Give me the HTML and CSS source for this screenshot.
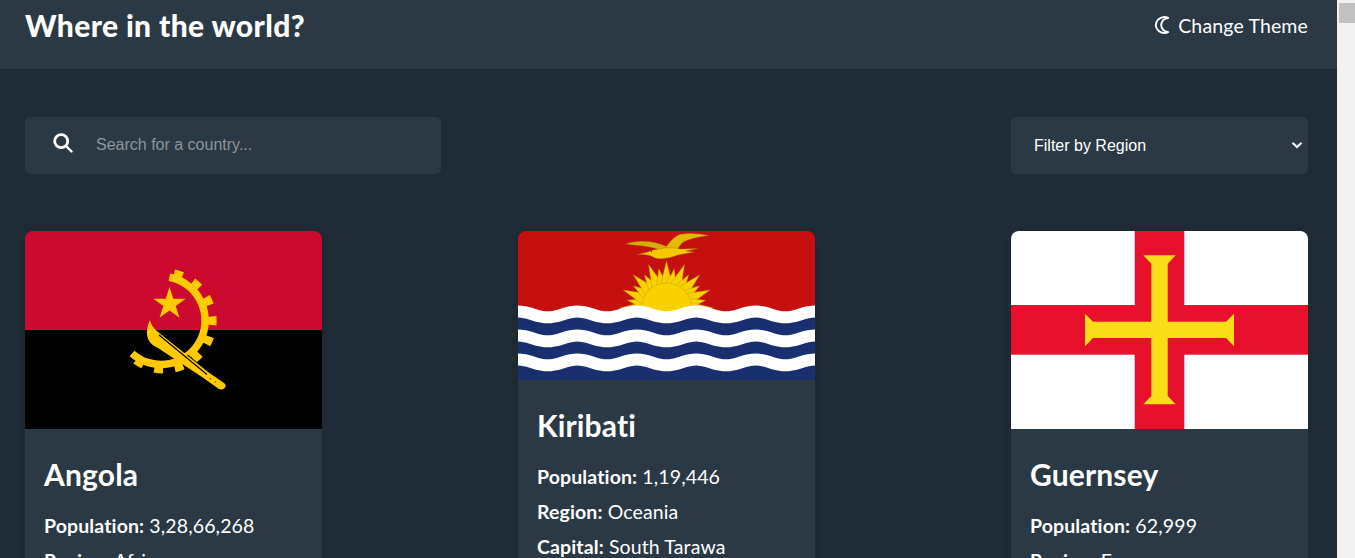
FILE: index.html
```html
<!DOCTYPE html>
<html>

<head>
    <meta charset="utf-8">
    <title>Where in the world?</title>
    <link rel="stylesheet" href="styles.css">
</head>

<body>
    <header class="topBar">
        <h1 class="siteTitle">Where in the world?</h1>
        <button class="themeButton" type="button">
            <svg class="moonIcon" viewBox="0 0 18 18" width="18" height="18">
                <path d="M11.600 1.100C7 1.100 2.800 4.500 2.800 9s4.200 7.900 8.800 7.900c1.300 0 2.500-.3 3.500-.8-3.800-.2-6.900-3.300-6.900-7.100s3.100-6.900 6.900-7.100c-1-.5-2.200-.8-3.500-.8z" fill="none" stroke="#fff" stroke-width="2" stroke-linejoin="round" />
            </svg>
            Change Theme
        </button>
    </header>

    <main class="content">
        <form class="toolBar">
            <label class="searchBox">
                <svg class="searchIcon" viewBox="0 0 20 20" width="20" height="20">
                    <circle cx="8.200" cy="8.200" r="6.500" fill="none" stroke="#fff" stroke-width="2.800" />
                    <path d="M13 13l5.500 5.500" stroke="#fff" stroke-width="2.400" stroke-linecap="round" />
                </svg>
                <input class="searchInput" type="text" placeholder="Search for a country...">
            </label>
            <div class="regionFilter">
                <select class="regionSelect">
                    <option>Filter by Region</option>
                    <option>Africa</option>
                    <option>Americas</option>
                    <option>Asia</option>
                    <option>Europe</option>
                    <option>Oceania</option>
                </select>
                <svg class="selectArrow" viewBox="0 0 12 8" width="12" height="8">
                    <path d="M1.500 1.800L6 6l4.500-4.200" fill="none" stroke="#fff" stroke-width="2.200" />
                </svg>
            </div>
        </form>

        <section class="countryGrid">
            <article class="countryCard">
                <svg class="flag" viewBox="0 0 297 198" width="297" height="198">
                    <rect width="297" height="99" fill="#cc092f" />
                    <rect y="99" width="297" height="99" />
                    <polygon fill="#ffcb00" points="144.500,56 148.300,67.700 160.700,67.700 150.700,75 154.500,86.800 144.500,79.500 134.500,86.800 138.300,75 128.300,67.700 140.700,67.700" />
                    <path d="M144.400 46.300A44 44 0 1 1 107 122.500" fill="none" stroke="#ffcb00" stroke-width="7.500" />
                    <path d="M149 43.500A47.500 47.500 0 1 1 106 124" fill="none" stroke="#ffcb00" stroke-width="10" stroke-dasharray="8.500 11.500" />
                    <path d="M160 127L184 147" stroke="#000" stroke-width="9" />
                    <path d="M125 89C120 100 120 111 133 117L177 146 194 158C199 160 203 155 199 152L183 141 133 101C129 98 126 94 125 89z" fill="#ffcb00" />
                    <path d="M134 104L182 143.500" stroke="#000" stroke-width="1.200" />
                    <path d="M185 147.500l.5.300M190 151l.5.300" stroke="#000" stroke-width="1.600" />
                </svg>
                <div class="cardBody">
                    <h2 class="countryName">Angola</h2>
                    <p class="countryInfo"><b>Population:</b> 3,28,66,268</p>
                    <p class="countryInfo"><b>Region:</b> Africa</p>
                    <p class="countryInfo"><b>Capital:</b> Luanda</p>
                </div>
            </article>

            <article class="countryCard">
                <svg class="flag" viewBox="0 0 297 149" width="297" height="149">
                    <defs>
                        <polygon id="longRay" points="142,56 148.500,30 155,56" fill="#f9d000" stroke="#a88400" stroke-width=".3" />
                        <polygon id="shortRay" points="142.500,56 148.500,37 154.500,56" fill="#f9d000" stroke="#a88400" stroke-width=".3" />
                        <path id="wave" d="M0 80.500C12 80.500 18 86.300 29.700 86.300S47.400 80.500 59.400 80.500 77.400 86.300 89.100 86.300 106.800 80.500 118.800 80.500 136.800 86.300 148.500 86.300 166.200 80.500 178.200 80.500 196.200 86.300 207.900 86.300 225.600 80.500 237.600 80.500 255.600 86.300 267.300 86.300 285 80.500 297 80.500" fill="none" stroke="#fff" stroke-width="12" />
                    </defs>
                    <rect width="297" height="149" fill="#c60f0f" />
                    <use href="#longRay" transform="rotate(-90 148.500 77)" />
                    <use href="#shortRay" transform="rotate(-78.750 148.500 77)" />
                    <use href="#longRay" transform="rotate(-67.500 148.500 77)" />
                    <use href="#shortRay" transform="rotate(-56.250 148.500 77)" />
                    <use href="#longRay" transform="rotate(-45 148.500 77)" />
                    <use href="#shortRay" transform="rotate(-33.750 148.500 77)" />
                    <use href="#longRay" transform="rotate(-22.500 148.500 77)" />
                    <use href="#shortRay" transform="rotate(-11.250 148.500 77)" />
                    <use href="#longRay" transform="rotate(0 148.500 77)" />
                    <use href="#shortRay" transform="rotate(11.250 148.500 77)" />
                    <use href="#longRay" transform="rotate(22.500 148.500 77)" />
                    <use href="#shortRay" transform="rotate(33.750 148.500 77)" />
                    <use href="#longRay" transform="rotate(45 148.500 77)" />
                    <use href="#shortRay" transform="rotate(56.250 148.500 77)" />
                    <use href="#longRay" transform="rotate(67.500 148.500 77)" />
                    <use href="#shortRay" transform="rotate(78.750 148.500 77)" />
                    <use href="#longRay" transform="rotate(90 148.500 77)" />
                    <circle cx="148.500" cy="77" r="25" fill="#f9d000" stroke="#a88400" stroke-width=".3" />
                    <rect y="84" width="297" height="65" fill="#1a2f70" />
                    <use href="#wave" />
                    <use href="#wave" y="24" />
                    <use href="#wave" y="48" />
                    <g fill="#f7c800" stroke="#8a6a00" stroke-width=".3">
                        <path d="M108 13C118 9 135 9 150 16L146 21C135 15 122 15 108 13z" fill="#d9ad00" />
                        <path d="M146 19C152 10 158 3 165 3 175 2 183 3 191 4.500 180 6 170 8 164 12L158 20z" fill="#e3b800" />
                        <path d="M119 23.500L130 21C134 18 140 19 146 17 152 17 158 16 162 18L180 17.500 168 20 176 21 160 24C152 27 142 29 137 27 134 25 130 23 119 23.500z" />
                    </g>
                    <circle cx="133.500" cy="20.300" r=".7" fill="#222" />
                </svg>
                <div class="cardBody">
                    <h2 class="countryName">Kiribati</h2>
                    <p class="countryInfo"><b>Population:</b> 1,19,446</p>
                    <p class="countryInfo"><b>Region:</b> Oceania</p>
                    <p class="countryInfo"><b>Capital:</b> South Tarawa</p>
                </div>
            </article>

            <article class="countryCard">
                <svg class="flag" viewBox="0 0 297 198" width="297" height="198">
                    <rect width="297" height="198" fill="#fff" />
                    <rect x="123.700" width="49.600" height="198" fill="#e8112d" />
                    <rect y="74" width="297" height="49.700" fill="#e8112d" />
                    <polygon fill="#f9dd16" points="132.300,24.300 164.700,24.300 156.700,32.700 156.700,90.700 215,90.700 223,82.700 223,115.300 215,107 156.700,107 156.700,165 164.700,173.300 132.300,173.300 140.300,165 140.300,107 82,107 74,115.300 74,82.700 82,90.700 140.300,90.700 140.300,32.700" />
                </svg>
                <div class="cardBody">
                    <h2 class="countryName">Guernsey</h2>
                    <p class="countryInfo"><b>Population:</b> 62,999</p>
                    <p class="countryInfo"><b>Region:</b> Europe</p>
                    <p class="countryInfo"><b>Capital:</b> St. Peter Port</p>
                </div>
            </article>
        </section>
    </main>

    <div class="scrollBar">
        <div class="scrollThumb"></div>
    </div>
</body>

</html>
```

FILE: styles.css
```css
body {
    margin: 0;
    padding-right: 18px;
    background-color: #202c37;
    color: #fff;
    font-family: "Lato", "Liberation Sans", sans-serif;
}

.scrollBar {
    position: fixed;
    top: 0;
    right: 0;
    bottom: 0;
    width: 18px;
    padding-top: 3px;
    box-sizing: border-box;
    background-color: #f1f1f1;
}

.scrollThumb {
    height: 20px;
    margin-left: 2px;
    background-color: #c1c1c1;
}

.topBar {
    display: flex;
    justify-content: space-between;
    align-items: flex-start;
    height: 69px;
    padding: 0 29px 0 25px;
    background-color: #2b3945;
    box-shadow: 0 2px 6px rgba(0, 0, 0, 0.1);
}

.siteTitle {
    margin: 7px 0 0;
    font-size: 30px;
    line-height: 36px;
    font-weight: 900;
    letter-spacing: 0.37px;
}

.themeButton {
    display: flex;
    align-items: center;
    gap: 7px;
    margin-top: 13px;
    padding: 0;
    height: 24px;
    border: 0;
    background: none;
    color: #fff;
    font-family: inherit;
    font-size: 19.500px;
    letter-spacing: 0.15px;
}

.content {
    padding: 48px 29px 0 25px;
}

.toolBar {
    display: flex;
    justify-content: space-between;
    margin: 0 0 57px;
}

.searchBox {
    display: flex;
    align-items: center;
    gap: 23px;
    width: 416px;
    height: 57px;
    padding: 0 0 2px 28px;
    box-sizing: border-box;
    border-radius: 5px;
    background-color: #2b3945;
    box-shadow: 0 2px 9px rgba(0, 0, 0, 0.05);
}

.searchIcon {
    margin-bottom: 3px;
}

.searchInput {
    flex: 1;
    min-width: 0;
    padding: 0;
    border: 0;
    outline: 0;
    background: none;
    color: #fff;
    font-family: "Liberation Sans", sans-serif;
    font-size: 16px;
}

.searchInput::placeholder {
    color: #8f9499;
}

.regionFilter {
    position: relative;
    width: 297px;
    height: 57px;
}

.regionSelect {
    width: 100%;
    height: 100%;
    padding-left: 23px;
    border: 0;
    border-radius: 5px;
    appearance: none;
    background-color: #2b3945;
    color: #fff;
    font-family: "Liberation Sans", sans-serif;
    font-size: 16px;
    box-shadow: 0 2px 9px rgba(0, 0, 0, 0.05);
}

.selectArrow {
    position: absolute;
    top: 24px;
    right: 5px;
    pointer-events: none;
}

.countryGrid {
    display: flex;
    justify-content: space-between;
    align-items: flex-start;
}

.countryCard {
    width: 297px;
    border-radius: 8px;
    overflow: hidden;
    background-color: #2b3945;
    box-shadow: 0 0 10px rgba(0, 0, 0, 0.15);
}

.flag {
    display: block;
}

.cardBody {
    padding: 24.500px 19px 30px;
}

.countryName {
    margin: 0 0 14px;
    font-size: 30px;
    line-height: 40px;
    font-weight: 700;
    letter-spacing: 0.15px;
}

.countryInfo {
    margin: 0;
    font-size: 19.500px;
    line-height: 35px;
    letter-spacing: 0.12px;
}
```
